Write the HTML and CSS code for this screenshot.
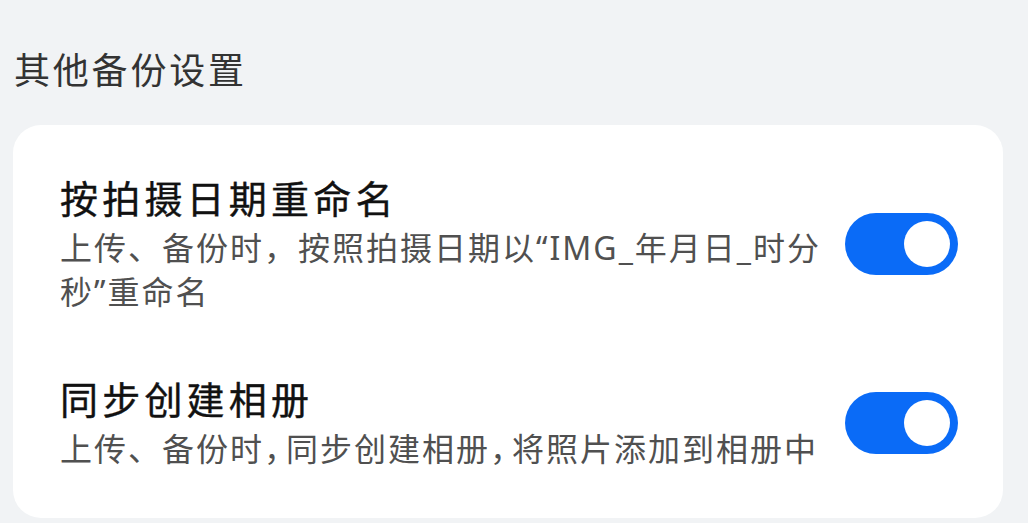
FILE: index.html
```html
<!DOCTYPE html>
<html>
<head>
    <title>其他备份设置</title>
    <meta charset="utf-8">
    <meta name="viewport" content="width=device-width, initial-scale=1">
    <link rel="stylesheet" href="styles.css">
</head>
<body>
    <div class="page">
        <h2 class="section-title">其他备份设置</h2>

        <div class="card">
            <div class="row">
                <div class="row-text">
                    <div class="row-title">按拍摄日期重命名</div>
                    <div class="row-desc">上传、备份时，按照拍摄日期以“IMG_年月日_时分秒”重命名</div>
                </div>
                <div class="switch on"><span class="knob"></span></div>
            </div>

            <div class="row">
                <div class="row-text">
                    <div class="row-title">同步创建相册</div>
                    <div class="row-desc">上传、备份时<span class="half">，</span>同步创建相册<span class="half">，</span>将照片添加到相册中</div>
                </div>
                <div class="switch on"><span class="knob"></span></div>
            </div>
        </div>
    </div>
</body>
</html>
```

FILE: styles.css
```css
body {
    font-family: "Noto Sans CJK SC", "Noto Sans", sans-serif;
    margin: 0;
    background: #f1f3f5;
}
.page {
    padding: 0 25px 0 13px;
}
.section-title {
    margin: 0;
    padding: 46px 0 0 1px;
    font-size: 36px;
    line-height: 44px;
    font-weight: 400;
    letter-spacing: 2.8px;
    color: #333;
}
.card {
    margin-top: 35px;
    background: white;
    border-radius: 28px;
    padding: 49px 45px 47px 47px;
    display: flex;
    flex-direction: column;
    gap: 61px;
}
.row {
    display: flex;
    align-items: center;
    gap: 22px;
}
.row-text {
    flex: 1;
}
.row-title {
    font-size: 38px;
    line-height: 46px;
    font-weight: 400;
    letter-spacing: 4.2px;
    color: #111;
    -webkit-text-stroke: 0.4px #111;
}
.row-desc {
    margin-top: 6px;
    font-family: "Noto Sans", "Noto Sans CJK SC", sans-serif;
    font-size: 32px;
    line-height: 44px;
    letter-spacing: 2px;
    color: #505050;
}
.half {
    font-feature-settings: "halt" 1;
    letter-spacing: 6px;
}
.switch {
    width: 113px;
    height: 62px;
    border-radius: 31px;
    background: #0a6bf7;
    padding: 8px;
    box-sizing: border-box;
    display: flex;
    justify-content: flex-end;
}
.knob {
    width: 46px;
    height: 46px;
    border-radius: 50%;
    background: white;
}
```
